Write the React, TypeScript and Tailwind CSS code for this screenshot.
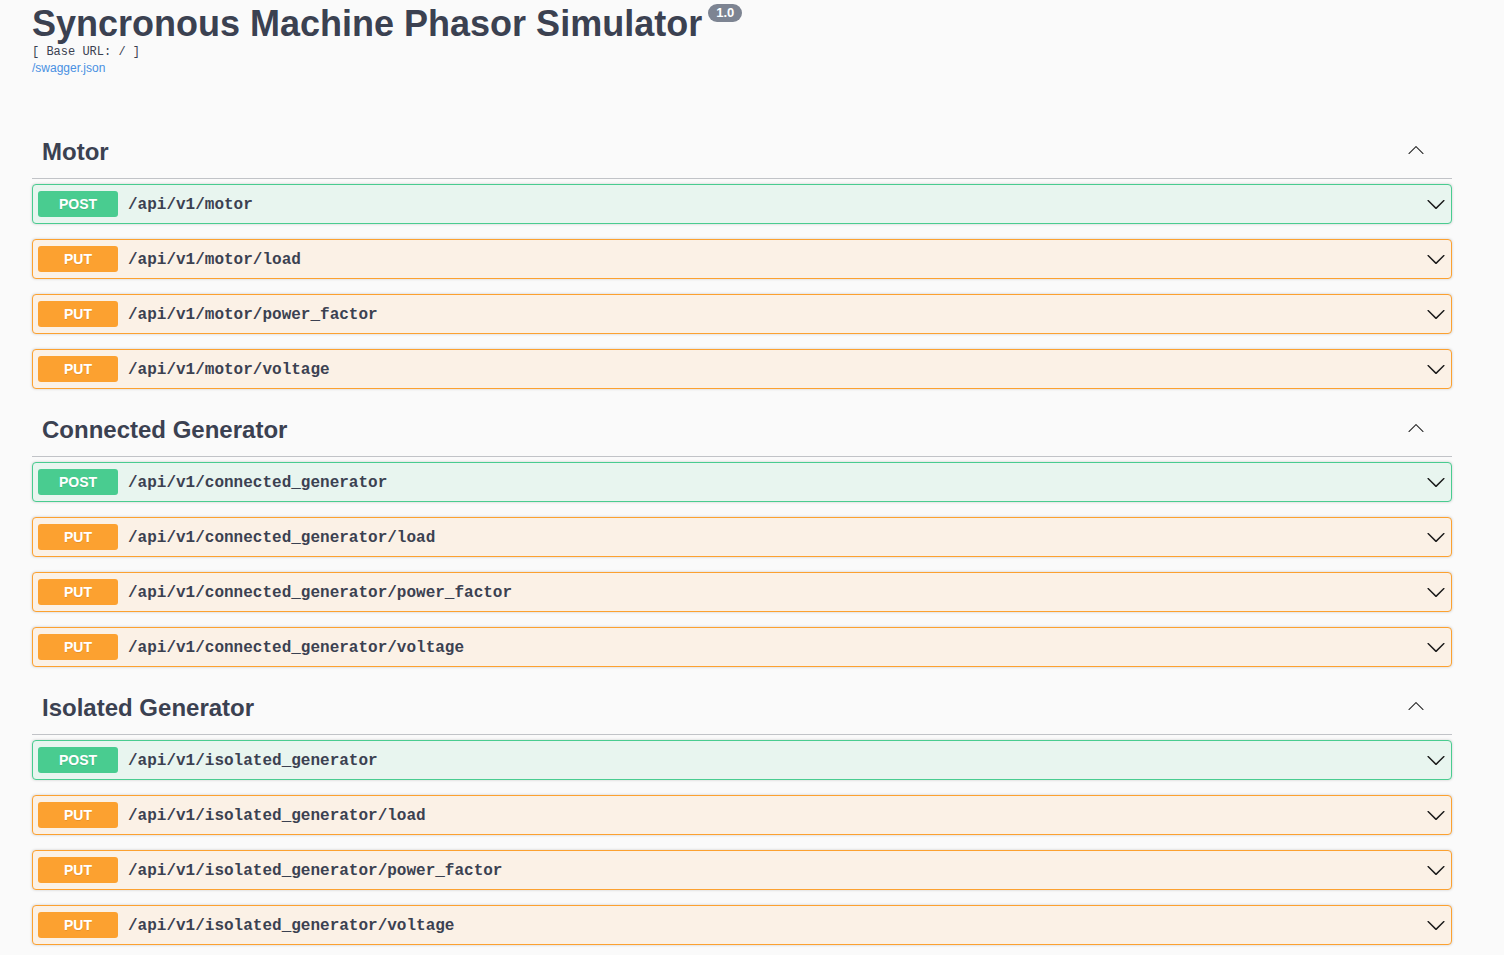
import React from 'react';

type Op = { method: 'POST' | 'PUT'; path: string };
type Tag = { name: string; ops: Op[] };

const tags: Tag[] = [
    {
        name: 'Motor',
        ops: [
            { method: 'POST', path: '/api/v1/motor' },
            { method: 'PUT', path: '/api/v1/motor/load' },
            { method: 'PUT', path: '/api/v1/motor/power_factor' },
            { method: 'PUT', path: '/api/v1/motor/voltage' },
        ],
    },
    {
        name: 'Connected Generator',
        ops: [
            { method: 'POST', path: '/api/v1/connected_generator' },
            { method: 'PUT', path: '/api/v1/connected_generator/load' },
            { method: 'PUT', path: '/api/v1/connected_generator/power_factor' },
            { method: 'PUT', path: '/api/v1/connected_generator/voltage' },
        ],
    },
    {
        name: 'Isolated Generator',
        ops: [
            { method: 'POST', path: '/api/v1/isolated_generator' },
            { method: 'PUT', path: '/api/v1/isolated_generator/load' },
            { method: 'PUT', path: '/api/v1/isolated_generator/power_factor' },
            { method: 'PUT', path: '/api/v1/isolated_generator/voltage' },
        ],
    },
];

const sans = "font-['Liberation_Sans',Arial,sans-serif]";
const mono = "font-['Liberation_Mono','Courier_New',monospace]";

function ArrowUp() {
    return (
        <svg width="20" height="20" viewBox="0 0 20 20" className="fill-[#1a1a1a]">
            <path d="M17.418 14.908c-.189.189-.5.189-.689 0L10 8.18l-6.729 6.728c-.189.189-.5.189-.689 0-.189-.189-.189-.5 0-.689l7.074-7.074c.189-.189.5-.189.689 0l7.074 7.074c.189.189.189.5-.001.689z" />
        </svg>
    );
}

function ArrowDown() {
    return (
        <svg width="20" height="20" viewBox="0 0 20 20" className="fill-[#1a1a1a]">
            <path d="M17.418 6.109c.272-.268.709-.268.979 0s.271.701 0 .969l-7.908 7.83c-.27.268-.707.268-.979 0l-7.908-7.83c-.27-.268-.27-.701 0-.969.271-.268.709-.268.979 0L10 13.25l7.418-7.141z" />
        </svg>
    );
}

function OpBlock({ op }: { op: Op }) {
    const isPost = op.method === 'POST';
    return (
        <div
            className={`mb-[15px] flex h-10 items-center rounded border px-[5px] shadow-[0_0_3px_rgba(0,0,0,0.19)] ${
                isPost ? 'border-[#49cc90] bg-[#e8f5ef]' : 'border-[#fca130] bg-[#fbf1e6]'
            }`}
        >
            <span
                className={`flex h-[26px] w-20 items-center justify-center rounded-[3px] text-[14px] font-bold text-white [text-shadow:0_1px_0_rgba(0,0,0,0.1)] ${sans} ${
                    isPost ? 'bg-[#49cc90]' : 'bg-[#fca130]'
                }`}
            >
                {op.method}
            </span>
            <span className={`px-[10px] pt-[1px] text-[16px] font-bold text-[#3b4151] ${mono}`}>{op.path}</span>
            <span className="ml-auto flex items-center">
                <ArrowDown />
            </span>
        </div>
    );
}

export default function App() {
    return (
        <div className={`min-h-screen bg-[#fafafa] pt-[1px] text-[#3b4151] ${sans}`}>
            <div className="ml-8 w-[1420px]">
                <header className="pb-[51px]">
                    <h2 className="mt-[2px] flex items-start text-[36px] font-bold leading-[42px] text-[#3b4151]">
                        Syncronous Machine Phasor Simulator
                        <span className="ml-[6px] mt-[1px] rounded-full bg-[#7d8492] px-[8px] py-[2px] text-[13px] font-bold leading-[14px] text-white">
                            1.0
                        </span>
                    </h2>
                    <div className={`text-[12px] leading-[14px] text-[#3b4151] ${mono}`}>[ Base URL: / ]</div>
                    <div className="mt-[2px] text-[12px] leading-[14px] text-[#4990e2]">/swagger.json</div>
                </header>

                {tags.map((tag) => (
                    <section key={tag.name}>
                        <div className="mb-[5px] flex h-[53px] items-center border-b border-[#c1c3c7] pl-[10px] pr-[26px]">
                            <h3 className="text-[24px] font-bold text-[#3b4151]">{tag.name}</h3>
                            <span className="ml-auto mb-[7px] flex items-center">
                                <ArrowUp />
                            </span>
                        </div>
                        {tag.ops.map((op) => (
                            <OpBlock key={op.path} op={op} />
                        ))}
                    </section>
                ))}
            </div>
        </div>
    );
}
